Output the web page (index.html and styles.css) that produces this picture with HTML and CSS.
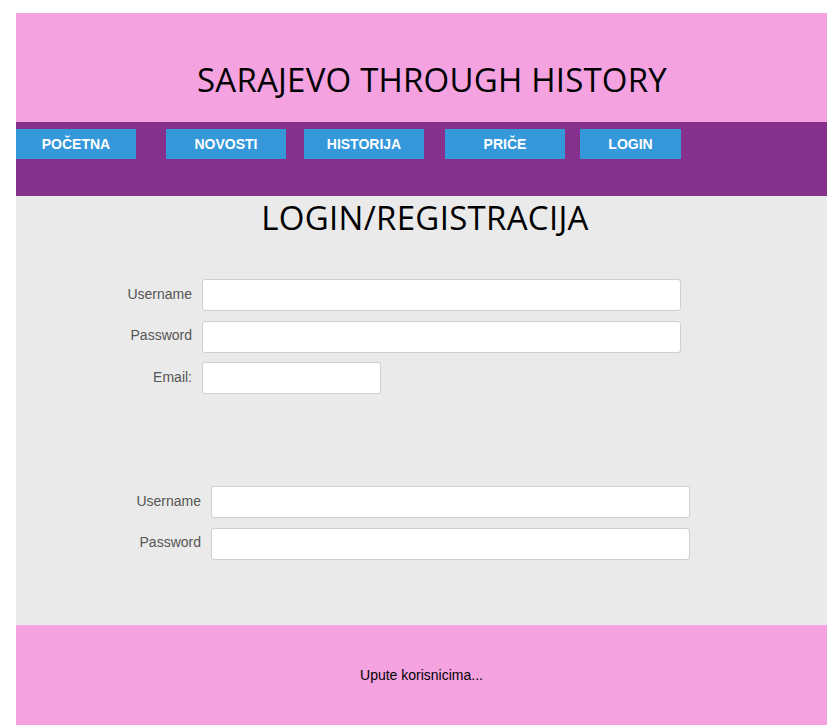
FILE: index.html
```html
<!DOCTYPE html>
<html>
<head>
<meta charset="utf-8">
<title>Sarajevo Through History</title>
<link rel="stylesheet" href="styles.css">
</head>
<body>
<div class="page">
  <header class="header">
    <h1 class="title">SARAJEVO THROUGH HISTORY</h1>
  </header>
  <nav class="nav">
    <a class="nav-btn nb1" href="#">POČETNA</a>
    <a class="nav-btn nb2" href="#">NOVOSTI</a>
    <a class="nav-btn nb3" href="#">HISTORIJA</a>
    <a class="nav-btn nb4" href="#">PRIČE</a>
    <a class="nav-btn nb5" href="#">LOGIN</a>
  </nav>
  <main class="main">
    <h2 class="heading">LOGIN/REGISTRACIJA</h2>
    <form class="form form-reg">
      <label class="lbl">Username</label>
      <input class="field" type="text">
      <label class="lbl">Password</label>
      <input class="field" type="password">
      <label class="lbl">Email:</label>
      <input class="field field-short" type="text">
    </form>
    <form class="form form-login">
      <label class="lbl">Username</label>
      <input class="field" type="text">
      <label class="lbl">Password</label>
      <input class="field" type="password">
    </form>
  </main>
  <footer class="footer">
    <p class="footer-text">Upute korisnicima...</p>
  </footer>
</div>
</body>
</html>
```
FILE: styles.css
```css
html, body {
  margin: 0;
  padding: 0;
  background: #ffffff;
  overflow: hidden;
}
.page {
  margin: 13px 0 0 16px;
  font-family: "Liberation Sans", Arial, sans-serif;
}
.header {
  background: #f5a2e0;
  height: 109px;
  box-sizing: border-box;
  padding-top: 45px;
}
.title {
  margin: 0;
  font-family: "Open Sans", sans-serif;
  font-weight: 400;
  font-size: 33px;
  letter-spacing: 0.2px;
  line-height: 43px;
  text-align: center;
  padding-left: 21px;
  color: #000;
}
.nav {
  background: #85308b;
  height: 74px;
  box-sizing: border-box;
  padding-top: 7px;
  display: flex;
  align-items: flex-start;
}
.nav-btn {
  display: flex;
  align-items: center;
  justify-content: center;
  height: 30px;
  width: 120px;
  background: #3498db;
  color: #ffffff;
  font-weight: 700;
  font-size: 14px;
  text-decoration: none;
}
.nb2 { margin-left: 30px; }
.nb3 { margin-left: 18px; }
.nb4 { margin-left: 21px; }
.nb5 { margin-left: 15px; width: 101px; }
.main {
  background: #eaeaea;
  height: 429px;
  box-sizing: border-box;
  overflow: hidden;
}
.heading {
  margin: 0;
  font-family: "Open Sans", sans-serif;
  font-weight: 400;
  font-size: 33px;
  letter-spacing: 0.3px;
  line-height: 44px;
  text-align: center;
  padding-left: 7px;
  color: #000;
}
.form {
  display: grid;
  grid-template-columns: 100px 479px;
  column-gap: 10px;
  row-gap: 9.5px;
  align-items: center;
}
.form-reg {
  margin: 39px 0 0 76px;
}
.form-login {
  margin: 92px 0 0 85px;
}
.lbl {
  font-size: 14px;
  color: #555555;
  justify-self: end;
  padding-bottom: 3px;
}
.field {
  justify-self: start;
  box-sizing: border-box;
  width: 479px;
  height: 32px;
  margin: 0;
  background: #ffffff;
  border: 1px solid #cfcfcf;
  border-radius: 3px;
  padding: 0 8px;
  font-family: "Liberation Sans", Arial, sans-serif;
  font-size: 14px;
}
.field-short {
  width: 179px;
}
.footer {
  background: #f5a2e0;
  height: 120px;
  box-sizing: border-box;
  padding-top: 42px;
}
.footer-text {
  margin: 0;
  font-size: 14px;
  line-height: 16px;
  text-align: center;
  color: #000;
}
```
